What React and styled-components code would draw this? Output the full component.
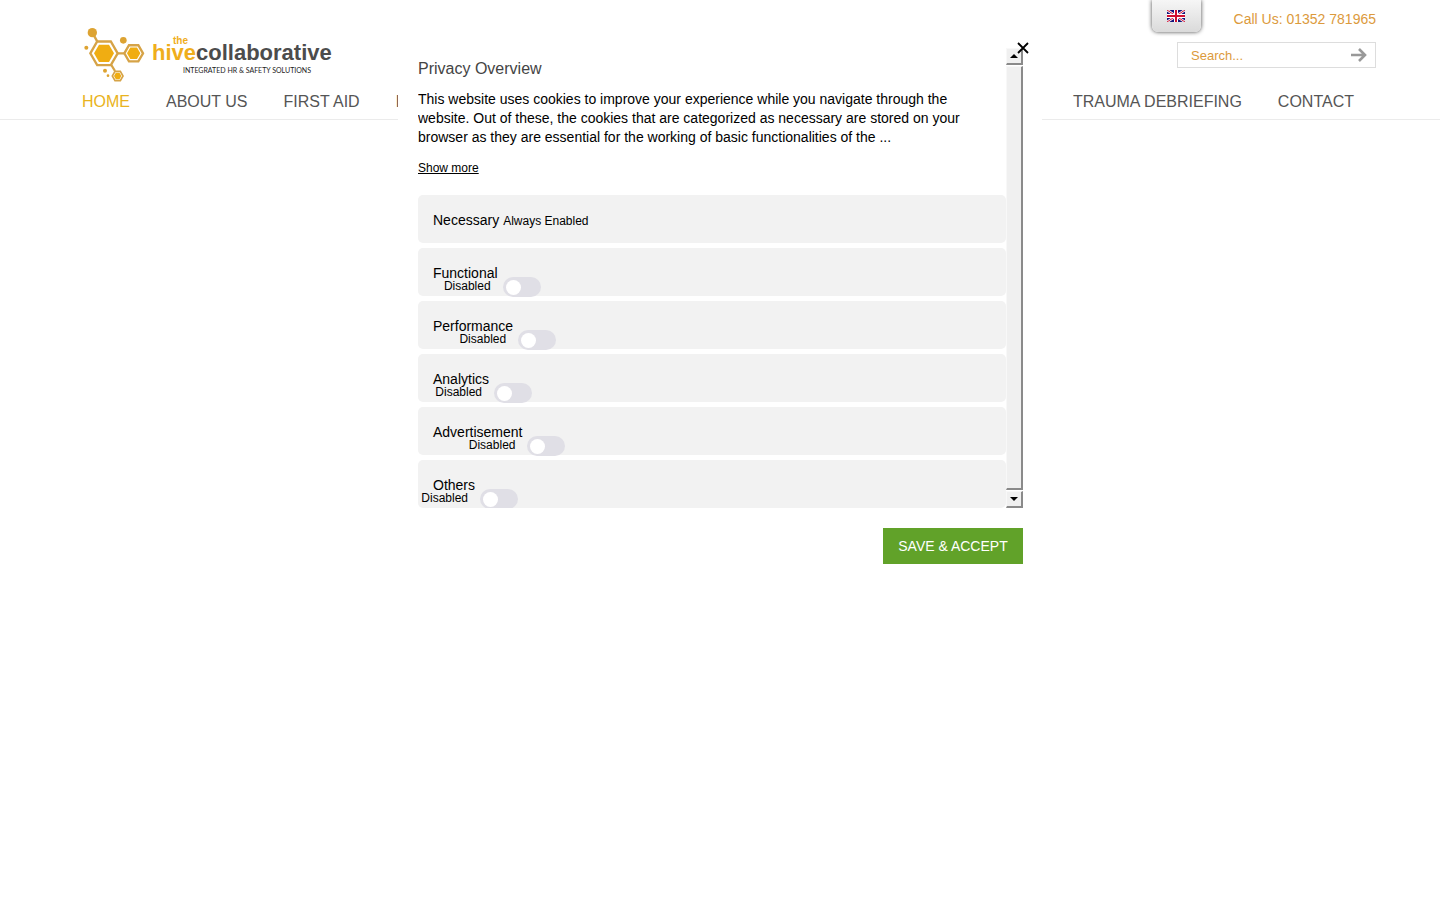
import React from 'react'
import styled, { createGlobalStyle } from 'styled-components'

const GlobalStyle = createGlobalStyle`
    * {
        box-sizing: border-box;
    }
    body {
        margin: 0;
        background: #fff;
        color: #000;
        font-family: "Liberation Sans", Arial, sans-serif;
        font-size: 14px;
    }
`

const Header = styled.header`
    border-bottom: 1px solid #ebebeb;
    padding: 0 64px;
`

const TopBar = styled.div`
    display: flex;
    justify-content: space-between;
    height: 84px;
`

const LogoLink = styled.a`
    display: block;
    padding: 25px 0 0 19px;
`

const LogoSvg = styled.svg`
    display: block;
`

const Tools = styled.div`
    display: flex;
    flex-direction: column;
    align-items: flex-end;
    gap: 4px;
`

const Contact = styled.div`
    display: flex;
    gap: 33px;
    line-height: 38px;
    color: #dc9a3c;
`

const FlagTab = styled.button`
    display: flex;
    justify-content: center;
    width: 49px;
    height: 32px;
    padding: 10px 0 0;
    border: 0;
    border-radius: 0 0 6px 6px;
    background: linear-gradient(#f6f6f6, #dadada);
    box-shadow: 0 0 4px #444;
`

const SearchForm = styled.form`
    display: flex;
    width: 199px;
    height: 26px;
    border: 1px solid #ddd;
`

const SearchInput = styled.input`
    flex: 1;
    min-width: 0;
    padding: 0 0 0 13px;
    border: 0;
    outline: 0;
    background: none;
    font: 13px "Liberation Sans", Arial, sans-serif;
    &::placeholder {
        color: #dc9a3c;
        opacity: 1;
    }
`

const SearchButton = styled.button`
    display: flex;
    align-items: center;
    padding: 0 8px;
    border: 0;
    background: none;
`

const Nav = styled.nav`
    display: flex;
    gap: 36px;
    padding: 0 22px 0 18px;
    line-height: 35px;
`

const NavLink = styled.a`
    font-size: 16px;
    color: ${props => props.$active ? '#e9b320' : '#555'};
    text-decoration: none;
    white-space: nowrap;
    ${props => props.$pushed && 'margin-left: auto;'}
`

const Overlay = styled.div`
    position: fixed;
    inset: 0;
    display: flex;
    justify-content: center;
    align-items: flex-start;
    padding-top: 28px;
`

const Dialog = styled.section`
    position: relative;
    width: 644px;
    max-width: 100%;
    padding: 20px 19px 20px 20px;
    background: #fff;
`

const CloseButton = styled.button`
    position: absolute;
    top: 14px;
    right: 13px;
    display: flex;
    padding: 0;
    border: 0;
    background: none;
`

const ScrollArea = styled.div`
    display: flex;
    height: 460px;
    overflow: hidden;
`

const Content = styled.div`
    flex: 1;
    min-width: 0;
    padding-top: 11px;
`

const Title = styled.h4`
    margin: 0 0 11px;
    font-size: 16px;
    font-weight: 400;
    line-height: 20px;
    color: #444;
`

const Para = styled.p`
    margin: 0 0 11px;
    padding-right: 20px;
    line-height: 19px;
`

const ShowMore = styled.a`
    display: block;
    margin-bottom: 17px;
    font-size: 12px;
    line-height: 20px;
    color: #000;
`

const Row = styled.div`
    display: flex;
    gap: 4px;
    height: 48px;
    margin-bottom: 5px;
    padding: 15px 15px 0;
    border-radius: 5px;
    background: #f2f2f2;
    line-height: 20px;
`

const AlwaysOn = styled.span`
    font-size: 12px;
    line-height: 22px;
`

const Switch = styled.label`
    position: relative;
    margin: 14px 0 0 1px;
    height: 20px;
`

const Status = styled.span`
    position: absolute;
    right: 50px;
    top: 0;
    font-size: 12px;
    line-height: 18px;
`

const Toggle = styled.input`
    appearance: none;
    display: block;
    width: 38px;
    height: 20px;
    margin: 0;
    padding: 3px;
    border-radius: 10px;
    background: #e0dfe6;
    &::before {
        content: '';
        display: block;
        width: 15px;
        height: 15px;
        border-radius: 50%;
        background: #fff;
    }
    &:checked {
        background: #61a229;
    }
    &:checked::before {
        margin-left: auto;
    }
`

const ScrollBar = styled.div`
    display: flex;
    flex-direction: column;
    gap: 1px;
    width: 17px;
`

const ScrollPiece = styled.div`
    display: flex;
    align-items: center;
    justify-content: center;
    flex: ${props => props.$thumb ? '1' : '0 0 17px'};
    border: 1px solid #f8f8f8;
    border-right: 2px solid #8a8a8a;
    border-bottom: 2px solid #8a8a8a;
    background: #f0f0f0;
`

const Actions = styled.div`
    display: flex;
    justify-content: flex-end;
    margin-top: 20px;
`

const SaveButton = styled.button`
    width: 140px;
    height: 36px;
    padding: 0;
    border: 0;
    background: #61a229;
    color: #fff;
    font: 14px "Liberation Sans", Arial, sans-serif;
`

const hex = (cx, cy, r) => [0, 60, 120, 180, 240, 300].map(a => {
    const rad = a * Math.PI / 180
    return `${cx + r * Math.cos(rad)},${cy + r * Math.sin(rad)}`
}).join(' ')

const Logo = () => (
    <LogoSvg width="260" height="60" viewBox="0 0 260 60" role="img" aria-label="the hive collaborative">
        <g transform="translate(-13 -10) scale(.33333)">
            <g stroke="#d6a347" strokeWidth="7" fill="none">
                <path d="M67 53L82 80M142 115H163M124 150L135 168" />
                <polygon points={hex(102, 115, 41)} />
                <polygon points={hex(191, 115, 28)} />
                <polygon points={hex(143, 183, 16)} strokeWidth="5" />
            </g>
            <g fill="#f0ad12">
                <polygon points={hex(102, 115, 30)} />
                <polygon points={hex(191, 115, 20)} />
                <polygon points={hex(143, 183, 11)} />
            </g>
            <g fill="#dda332">
                <circle cx="67" cy="53" r="14" />
                <circle cx="160" cy="76" r="10" />
                <circle cx="49" cy="98" r="6" />
                <circle cx="105" cy="167" r="6" />
                <circle cx="114" cy="182" r="4" />
            </g>
        </g>
        <text x="90" y="19" fontFamily="Liberation Sans" fontWeight="700" fontSize="10" fill="#efae1c">the</text>
        <text x="69" y="35" fontFamily="Liberation Sans" fontWeight="700" fontSize="22" fill="#efae1c">
            hive<tspan fill="#4c4c4c">collaborative</tspan>
        </text>
        <text x="100" y="48" fontFamily="Lato" fontSize="7" fill="#222">INTEGRATED HR &amp; SAFETY SOLUTIONS</text>
    </LogoSvg>
)

const Flag = () => (
    <svg width="18" height="12" viewBox="0 0 18 12" aria-hidden="true">
        <rect width="18" height="12" fill="#14147a" />
        <path d="M0 0L18 12M18 0L0 12" stroke="#fff" strokeWidth="2.4" />
        <path d="M0 0L18 12M18 0L0 12" stroke="#d01030" strokeWidth="1" />
        <path d="M9 0V12M0 6H18" stroke="#fff" strokeWidth="4" />
        <path d="M9 0V12M0 6H18" stroke="#d01030" strokeWidth="2" />
    </svg>
)

const categories = ['Functional', 'Performance', 'Analytics', 'Advertisement', 'Others']

class App extends React.Component {
    constructor() {
        super();
        this.state = {
            enabled: {}
        }
    }

    toggle = (name) => {
        this.setState({
            enabled: { ...this.state.enabled, [name]: !this.state.enabled[name] }
        })
    }

    render() {
        return (
            <>
                <GlobalStyle />
                <Header>
                    <TopBar>
                        <LogoLink href="#"><Logo /></LogoLink>
                        <Tools>
                            <Contact>
                                <FlagTab aria-label="English"><Flag /></FlagTab>
                                <span>Call Us: 01352 781965</span>
                            </Contact>
                            <SearchForm>
                                <SearchInput type="text" placeholder="Search..." aria-label="Search" />
                                <SearchButton type="button" aria-label="Go">
                                    <svg width="17" height="14" viewBox="0 0 17 14" fill="none" stroke="#999" strokeWidth="2.6">
                                        <path d="M1 7H15M9 1L15 7L9 13" />
                                    </svg>
                                </SearchButton>
                            </SearchForm>
                        </Tools>
                    </TopBar>
                    <Nav>
                        <NavLink href="#" $active>HOME</NavLink>
                        <NavLink href="#">ABOUT US</NavLink>
                        <NavLink href="#">FIRST AID</NavLink>
                        <NavLink href="#">H</NavLink>
                        <NavLink href="#" $pushed>TRAUMA DEBRIEFING</NavLink>
                        <NavLink href="#">CONTACT</NavLink>
                    </Nav>
                </Header>
                <Overlay>
                    <Dialog role="dialog" aria-label="Privacy Overview">
                        <ScrollArea>
                            <Content>
                                <Title>Privacy Overview</Title>
                                <Para>
                                    This website uses cookies to improve your experience while you navigate through the website. Out of these, the cookies that are categorized as necessary are stored on your browser as they are essential for the working of basic functionalities of the ...
                                </Para>
                                <ShowMore href="#">Show more</ShowMore>
                                <Row>
                                    <span>Necessary</span>
                                    <AlwaysOn>Always Enabled</AlwaysOn>
                                </Row>
                                {categories.map(name => (
                                    <Row key={name}>
                                        <span>{name}</span>
                                        <Switch>
                                            <Toggle
                                                type="checkbox"
                                                aria-label={name}
                                                checked={!!this.state.enabled[name]}
                                                onChange={() => this.toggle(name)}
                                            />
                                            <Status>{this.state.enabled[name] ? 'Enabled' : 'Disabled'}</Status>
                                        </Switch>
                                    </Row>
                                ))}
                            </Content>
                            <ScrollBar aria-hidden="true">
                                <ScrollPiece>
                                    <svg width="8" height="4" viewBox="0 0 8 4"><path d="M0 4L4 0L8 4Z" /></svg>
                                </ScrollPiece>
                                <ScrollPiece $thumb />
                                <ScrollPiece>
                                    <svg width="8" height="4" viewBox="0 0 8 4"><path d="M0 0L4 4L8 0Z" /></svg>
                                </ScrollPiece>
                            </ScrollBar>
                        </ScrollArea>
                        <Actions>
                            <SaveButton>SAVE &amp; ACCEPT</SaveButton>
                        </Actions>
                        <CloseButton aria-label="Close">
                            <svg width="12" height="12" viewBox="0 0 12 12" stroke="#000" strokeWidth="1.8">
                                <path d="M1 1L11 11M11 1L1 11" />
                            </svg>
                        </CloseButton>
                    </Dialog>
                </Overlay>
            </>
        )
    }
}

export default App
